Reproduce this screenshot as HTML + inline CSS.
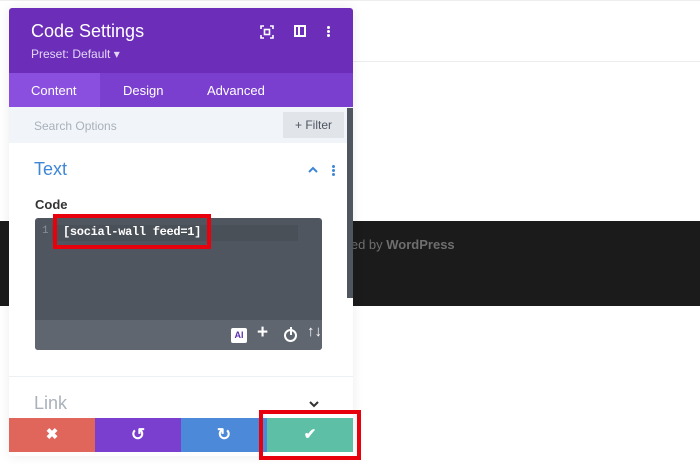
<!DOCTYPE html>
<html><head><style>
*{margin:0;padding:0;box-sizing:border-box}
body{width:700px;height:464px;background:#fff;position:relative;overflow:hidden;font-family:"Liberation Sans",sans-serif}
.abs{position:absolute}
</style></head><body>
<div class="abs" style="left:0;top:0;width:700px;height:1px;background:#eee"></div>
<div class="abs" style="left:353px;top:61px;width:347px;height:1px;background:#ececec"></div>
<div class="abs" style="left:0;top:221px;width:700px;height:85px;background:#1b1b1b"></div>
<div class="abs" style="left:314px;top:237px;font-size:13px;color:#6e6e6e;white-space:nowrap">Powered by <b>WordPress</b></div>

<div class="abs" style="left:9px;top:8px;width:344px;height:448px;background:#fff;border-radius:3px;overflow:hidden;box-shadow:0 0 12px rgba(0,0,0,.08)">
  <div class="abs" style="left:0;top:0;width:344px;height:65px;background:#6c2eb9"></div>
  <div class="abs" style="left:22px;top:13px;color:#fff;font-size:18px">Code Settings</div>
  <div class="abs" style="left:22px;top:39px;color:#e3d6f5;font-size:12px">Preset: Default ▾</div>
  <svg class="abs" style="left:251px;top:17px" width="14" height="14" viewBox="0 0 14 14" fill="none" stroke="#fff" stroke-width="1.6"><path d="M1 4V1h3M10 1h3v3M13 10v3h-3M4 13H1v-3"/><rect x="4.5" y="4.5" width="5" height="5"/></svg>
  <svg class="abs" style="left:285px;top:17px" width="12" height="12" viewBox="0 0 12 12"><rect x="1" y="1" width="10" height="10" fill="none" stroke="#fff" stroke-width="2"/><rect x="4" y="1" width="2" height="10" fill="#fff"/></svg>
  <div class="abs" style="left:318px;top:18px;width:3px;height:3px;background:#fff;border-radius:2px;box-shadow:0 4px 0 #fff,0 8px 0 #fff"></div>
  <div class="abs" style="left:0;top:65px;width:344px;height:34px;background:#7b3fd0"></div>
  <div class="abs" style="left:0;top:65px;width:91px;height:34px;background:#8a4fdf"></div>
  <div class="abs" style="left:22px;top:75px;color:#fff;font-size:13px">Content</div>
  <div class="abs" style="left:114px;top:75px;color:#fff;font-size:13px">Design</div>
  <div class="abs" style="left:198px;top:75px;color:#fff;font-size:13px">Advanced</div>
  <div class="abs" style="left:0;top:99px;width:344px;height:36px;background:#f1f5f9"></div>
  <div class="abs" style="left:25px;top:111px;color:#a8b0ba;font-size:12px">Search Options</div>
  <div class="abs" style="left:274px;top:104px;width:61px;height:26px;background:#e1e5ea;color:#4d5561;font-size:12px;line-height:26px;text-align:center">+ Filter</div>
  <div class="abs" style="left:338px;top:100px;width:6px;height:190px;background:#4f5660"></div>
  <div class="abs" style="left:25px;top:151px;color:#3e87d6;font-size:18px">Text</div>
  <svg class="abs" style="left:298px;top:158px" width="12" height="8" viewBox="0 0 12 8"><path d="M2 6l4-4 4 4" fill="none" stroke="#3e87d6" stroke-width="2"/></svg>
  <div class="abs" style="left:323px;top:157px;width:3px;height:3px;background:#3e87d6;border-radius:2px;box-shadow:0 4px 0 #3e87d6,0 8px 0 #3e87d6"></div>
  <div class="abs" style="left:26px;top:189px;color:#333;font-size:13px;font-weight:bold">Code</div>
  <div class="abs" style="left:26px;top:210px;width:287px;height:132px;background:#4f5660;border-radius:3px;overflow:hidden">
    <div class="abs" style="left:17px;top:7px;width:246px;height:16px;background:#4a5058"></div>
    <div class="abs" style="left:7px;top:7px;color:#8a919a;font-size:11px;font-family:'Liberation Mono',monospace">1</div>
    <div class="abs" style="left:28px;top:7px;color:#fff;font-size:12px;font-weight:bold;font-family:'Liberation Mono',monospace;letter-spacing:-0.3px">[social-wall feed=1]</div>
    <div class="abs" style="left:0;top:102px;width:287px;height:30px;background:#5f6670"></div>
    <div class="abs" style="left:196px;top:110px;width:16px;height:15px;background:#fff;border-radius:2px;color:#5a2fb0;font-size:9px;font-weight:bold;text-align:center;line-height:15px">AI</div>
    <div class="abs" style="left:222px;top:104px;color:#fff;font-size:19px;font-weight:bold">+</div>
    <div class="abs" style="left:249px;top:111px;width:13px;height:13px;border:2px solid #fff;border-radius:50%"></div>
    <div class="abs" style="left:254.5px;top:109px;width:2px;height:8px;background:#fff"></div>
    <div class="abs" style="left:272px;top:105px;color:#fff;font-size:15px;font-weight:bold">↑↓</div>
  </div>
  <div class="abs" style="left:0;top:368px;width:344px;height:1px;background:#edf0f3"></div>
  <div class="abs" style="left:25px;top:385px;color:#aab1ba;font-size:18px">Link</div>
  <svg class="abs" style="left:299px;top:392px" width="12" height="8" viewBox="0 0 12 8"><path d="M2 2l4 4 4-4" fill="none" stroke="#333" stroke-width="2"/></svg>
  <div class="abs" style="left:0;top:410px;width:86px;height:34px;background:#e0665c;color:#fff;text-align:center;line-height:34px;font-size:15px;font-weight:bold">✖</div>
  <div class="abs" style="left:86px;top:410px;width:86px;height:34px;background:#7b3fd0;color:#fff;text-align:center;line-height:34px;font-size:17px;font-weight:bold">↺</div>
  <div class="abs" style="left:172px;top:410px;width:86px;height:34px;background:#4c8ad9;color:#fff;text-align:center;line-height:34px;font-size:17px;font-weight:bold">↻</div>
  <div class="abs" style="left:258px;top:410px;width:86px;height:34px;background:#5cbfa6;color:#fff;text-align:center;line-height:34px;font-size:15px;font-weight:bold">✔</div>
</div>
<div class="abs" style="left:53px;top:214px;width:158px;height:35px;border:4px solid #e8000d"></div>
<div class="abs" style="left:259px;top:410px;width:102px;height:50px;border:4px solid #e8000d"></div>
</body></html>
